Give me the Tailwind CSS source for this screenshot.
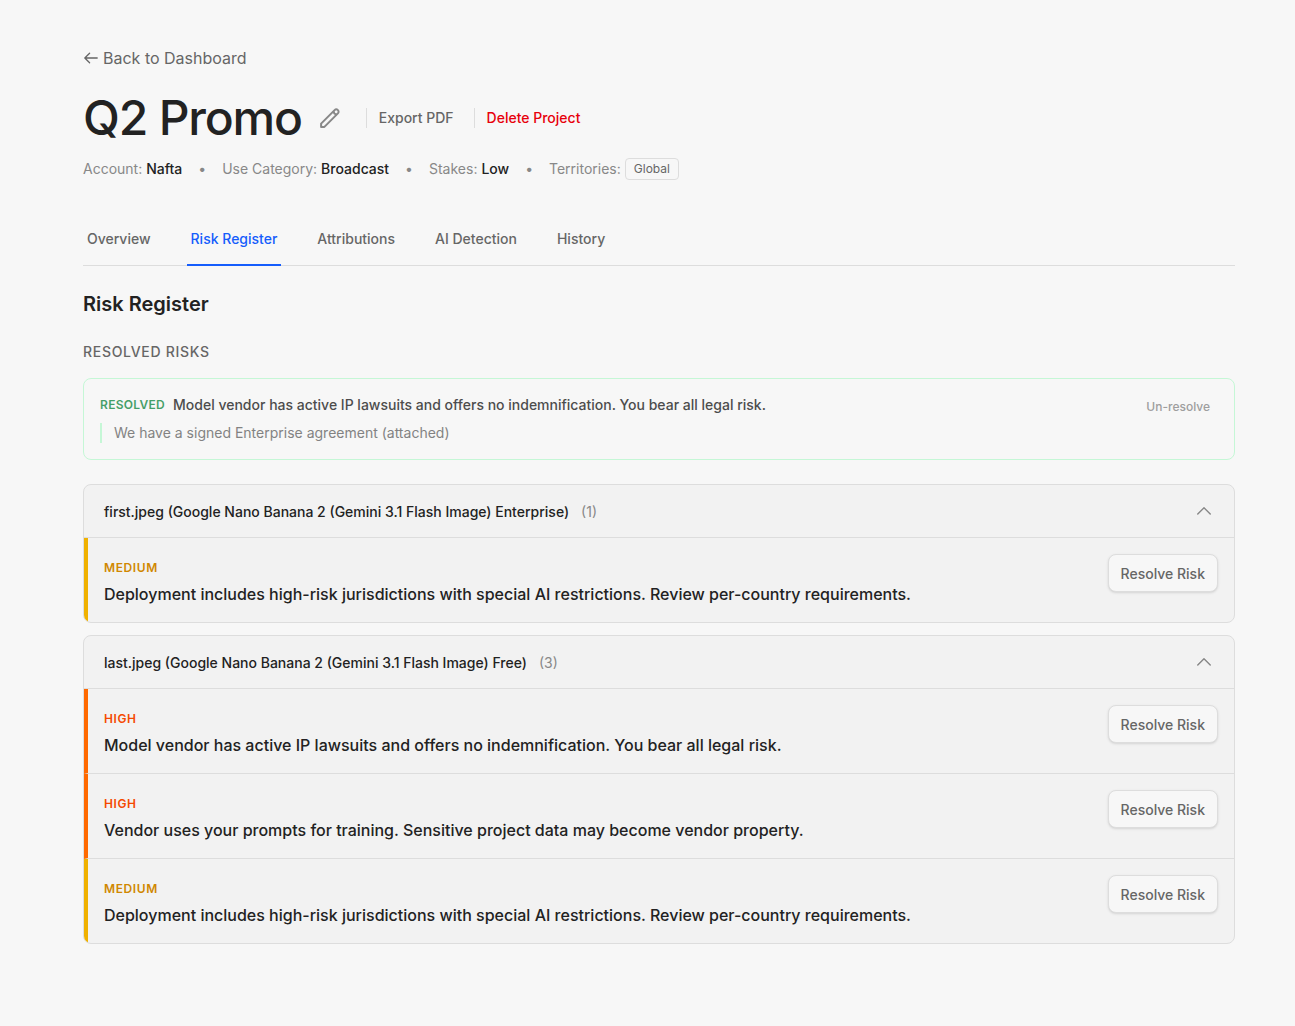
<!DOCTYPE html>
<html lang="en">
<head>
    <meta charset="UTF-8" />
    <title>Q2 Promo - Risk Register</title>
    <meta name="viewport" content="width=device-width, initial-scale=1" />
    <script src="https://cdn.jsdelivr.net/npm/@tailwindcss/browser@4"></script>
</head>
<body class="min-h-screen bg-[#f7f7f7] pt-[46px] pr-[60px] pb-20 pl-[83px] font-['Inter',sans-serif] text-[#222]">
    <header>
        <a href="#" class="flex w-fit items-center gap-1 text-base text-[#666] hover:text-[#222]">
            <svg class="size-4" viewBox="0 0 16 16" fill="none" stroke="currentColor" stroke-width="1.3" stroke-linecap="round" stroke-linejoin="round" aria-hidden="true">
                <path d="M14.2 8H2M6.6 3.2 1.8 8l4.8 4.8" />
            </svg>
            Back to Dashboard
        </a>

        <div class="mt-6 flex items-center">
            <h1 class="text-5xl font-medium tracking-tight">Q2 Promo</h1>
            <button type="button" aria-label="Edit name" class="ml-4 text-[#888]">
                <svg class="size-6" viewBox="0 0 24 24" fill="none" stroke="currentColor" stroke-width="2" stroke-linejoin="round" aria-hidden="true">
                    <path d="M3.1 20.9v-3.3L16.6 4.1a2.33 2.33 0 0 1 3.3 3.3L6.4 20.9z" />
                    <path d="M15.6 5.2c.1 1.9 1.3 3.1 3.2 3.2" />
                </svg>
            </button>
            <div class="ml-6 border-l border-[#ddd] pl-3 text-sm leading-5 font-medium text-[#666]">
                <button type="button">Export PDF</button>
            </div>
            <div class="ml-5 border-l border-[#ddd] pl-3 text-sm leading-5 font-medium text-[#e7000b]">
                <button type="button">Delete Project</button>
            </div>
        </div>

        <div class="mt-4 flex items-center gap-4 text-sm text-[#888]">
            <span>Account: <b class="font-medium text-[#222]">Nafta</b></span>
            <span>•</span>
            <span>Use Category: <b class="font-medium text-[#222]">Broadcast</b></span>
            <span>•</span>
            <span>Stakes: <b class="font-medium text-[#222]">Low</b></span>
            <span>•</span>
            <div class="flex items-center gap-1">
                <span>Territories:</span>
                <span class="rounded-sm border border-[#ddd] px-2 py-0.5 text-xs text-[#666]">Global</span>
            </div>
        </div>
    </header>

    <nav class="mt-8 flex gap-8 border-b border-[#ddd] text-sm font-medium text-[#666]">
        <a href="#" class="-mb-px border-b-2 border-transparent px-1 pt-[17px] pb-[15px]">Overview</a>
        <a href="#" aria-current="page" class="-mb-px border-b-2 border-[#155dfc] px-1 pt-[17px] pb-[15px] text-[#155dfc]">Risk Register</a>
        <a href="#" class="-mb-px border-b-2 border-transparent px-1 pt-[17px] pb-[15px]">Attributions</a>
        <a href="#" class="-mb-px border-b-2 border-transparent px-1 pt-[17px] pb-[15px]">AI Detection</a>
        <a href="#" class="-mb-px border-b-2 border-transparent px-1 pt-[17px] pb-[15px]">History</a>
    </nav>

    <main class="pt-6">
        <h2 class="text-xl font-semibold">Risk Register</h2>

        <h3 class="mt-6 text-sm font-medium tracking-wider text-[#666] uppercase">Resolved Risks</h3>
        <section class="mt-4 flex items-start justify-between rounded-lg border border-[#b9f8cf] p-4 opacity-80">
            <div>
                <div class="flex items-center gap-2">
                    <span class="text-xs font-semibold tracking-wide text-[#178a45] uppercase">Resolved</span>
                    <span class="text-sm font-medium text-[#222]">Model vendor has active IP lawsuits and offers no indemnification. You bear all legal risk.</span>
                </div>
                <p class="mt-2 border-l-2 border-[#b9f8cf] pl-3 text-sm text-[#666]">We have a signed Enterprise agreement (attached)</p>
            </div>
            <button type="button" class="px-2 py-1 text-xs font-medium text-[#888]">Un-resolve</button>
        </section>

        <div class="mt-6 space-y-3">
            <section class="overflow-hidden rounded-lg border border-[#ddd] bg-[#f2f2f2]">
                <button type="button" aria-expanded="true" class="flex w-full items-center px-5 pt-[17px] pb-[15px] text-left text-sm">
                    <span class="font-medium">first.jpeg (Google Nano Banana 2 (Gemini 3.1 Flash Image) Enterprise)</span>
                    <span class="ml-3 text-[#888]">(1)</span>
                    <svg class="ml-auto size-5 text-[#888]" viewBox="0 0 24 24" fill="none" stroke="currentColor" stroke-width="1.7" stroke-linecap="round" stroke-linejoin="round" aria-hidden="true">
                        <path d="m4.5 14.5 7.5-7.5 7.5 7.5" />
                    </svg>
                </button>
                <ul class="divide-y divide-[#ddd] border-t border-[#ddd]">
                    <li class="flex items-start justify-between border-l-4 border-l-[#f0b100] p-4">
                        <div>
                            <div class="text-xs leading-7 font-semibold tracking-wider text-[#d08700] uppercase">Medium</div>
                            <p class="font-medium">Deployment includes high-risk jurisdictions with special AI restrictions. Review per-country requirements.</p>
                        </div>
                        <button type="button" class="rounded-lg border border-[#ddd] bg-[#f7f7f7] px-3 pt-[9px] pb-[7px] text-sm font-medium text-[#666] shadow-sm">Resolve Risk</button>
                    </li>
                </ul>
            </section>

            <section class="overflow-hidden rounded-lg border border-[#ddd] bg-[#f2f2f2]">
                <button type="button" aria-expanded="true" class="flex w-full items-center px-5 pt-[17px] pb-[15px] text-left text-sm">
                    <span class="font-medium">last.jpeg (Google Nano Banana 2 (Gemini 3.1 Flash Image) Free)</span>
                    <span class="ml-3 text-[#888]">(3)</span>
                    <svg class="ml-auto size-5 text-[#888]" viewBox="0 0 24 24" fill="none" stroke="currentColor" stroke-width="1.7" stroke-linecap="round" stroke-linejoin="round" aria-hidden="true">
                        <path d="m4.5 14.5 7.5-7.5 7.5 7.5" />
                    </svg>
                </button>
                <ul class="divide-y divide-[#ddd] border-t border-[#ddd]">
                    <li class="flex items-start justify-between border-l-4 border-l-[#ff6900] p-4">
                        <div>
                            <div class="text-xs leading-7 font-semibold tracking-wider text-[#f54900] uppercase">High</div>
                            <p class="font-medium">Model vendor has active IP lawsuits and offers no indemnification. You bear all legal risk.</p>
                        </div>
                        <button type="button" class="rounded-lg border border-[#ddd] bg-[#f7f7f7] px-3 pt-[9px] pb-[7px] text-sm font-medium text-[#666] shadow-sm">Resolve Risk</button>
                    </li>
                    <li class="flex items-start justify-between border-l-4 border-l-[#ff6900] p-4">
                        <div>
                            <div class="text-xs leading-7 font-semibold tracking-wider text-[#f54900] uppercase">High</div>
                            <p class="font-medium">Vendor uses your prompts for training. Sensitive project data may become vendor property.</p>
                        </div>
                        <button type="button" class="rounded-lg border border-[#ddd] bg-[#f7f7f7] px-3 pt-[9px] pb-[7px] text-sm font-medium text-[#666] shadow-sm">Resolve Risk</button>
                    </li>
                    <li class="flex items-start justify-between border-l-4 border-l-[#f0b100] p-4">
                        <div>
                            <div class="text-xs leading-7 font-semibold tracking-wider text-[#d08700] uppercase">Medium</div>
                            <p class="font-medium">Deployment includes high-risk jurisdictions with special AI restrictions. Review per-country requirements.</p>
                        </div>
                        <button type="button" class="rounded-lg border border-[#ddd] bg-[#f7f7f7] px-3 pt-[9px] pb-[7px] text-sm font-medium text-[#666] shadow-sm">Resolve Risk</button>
                    </li>
                </ul>
            </section>
        </div>
    </main>
</body>
</html>
